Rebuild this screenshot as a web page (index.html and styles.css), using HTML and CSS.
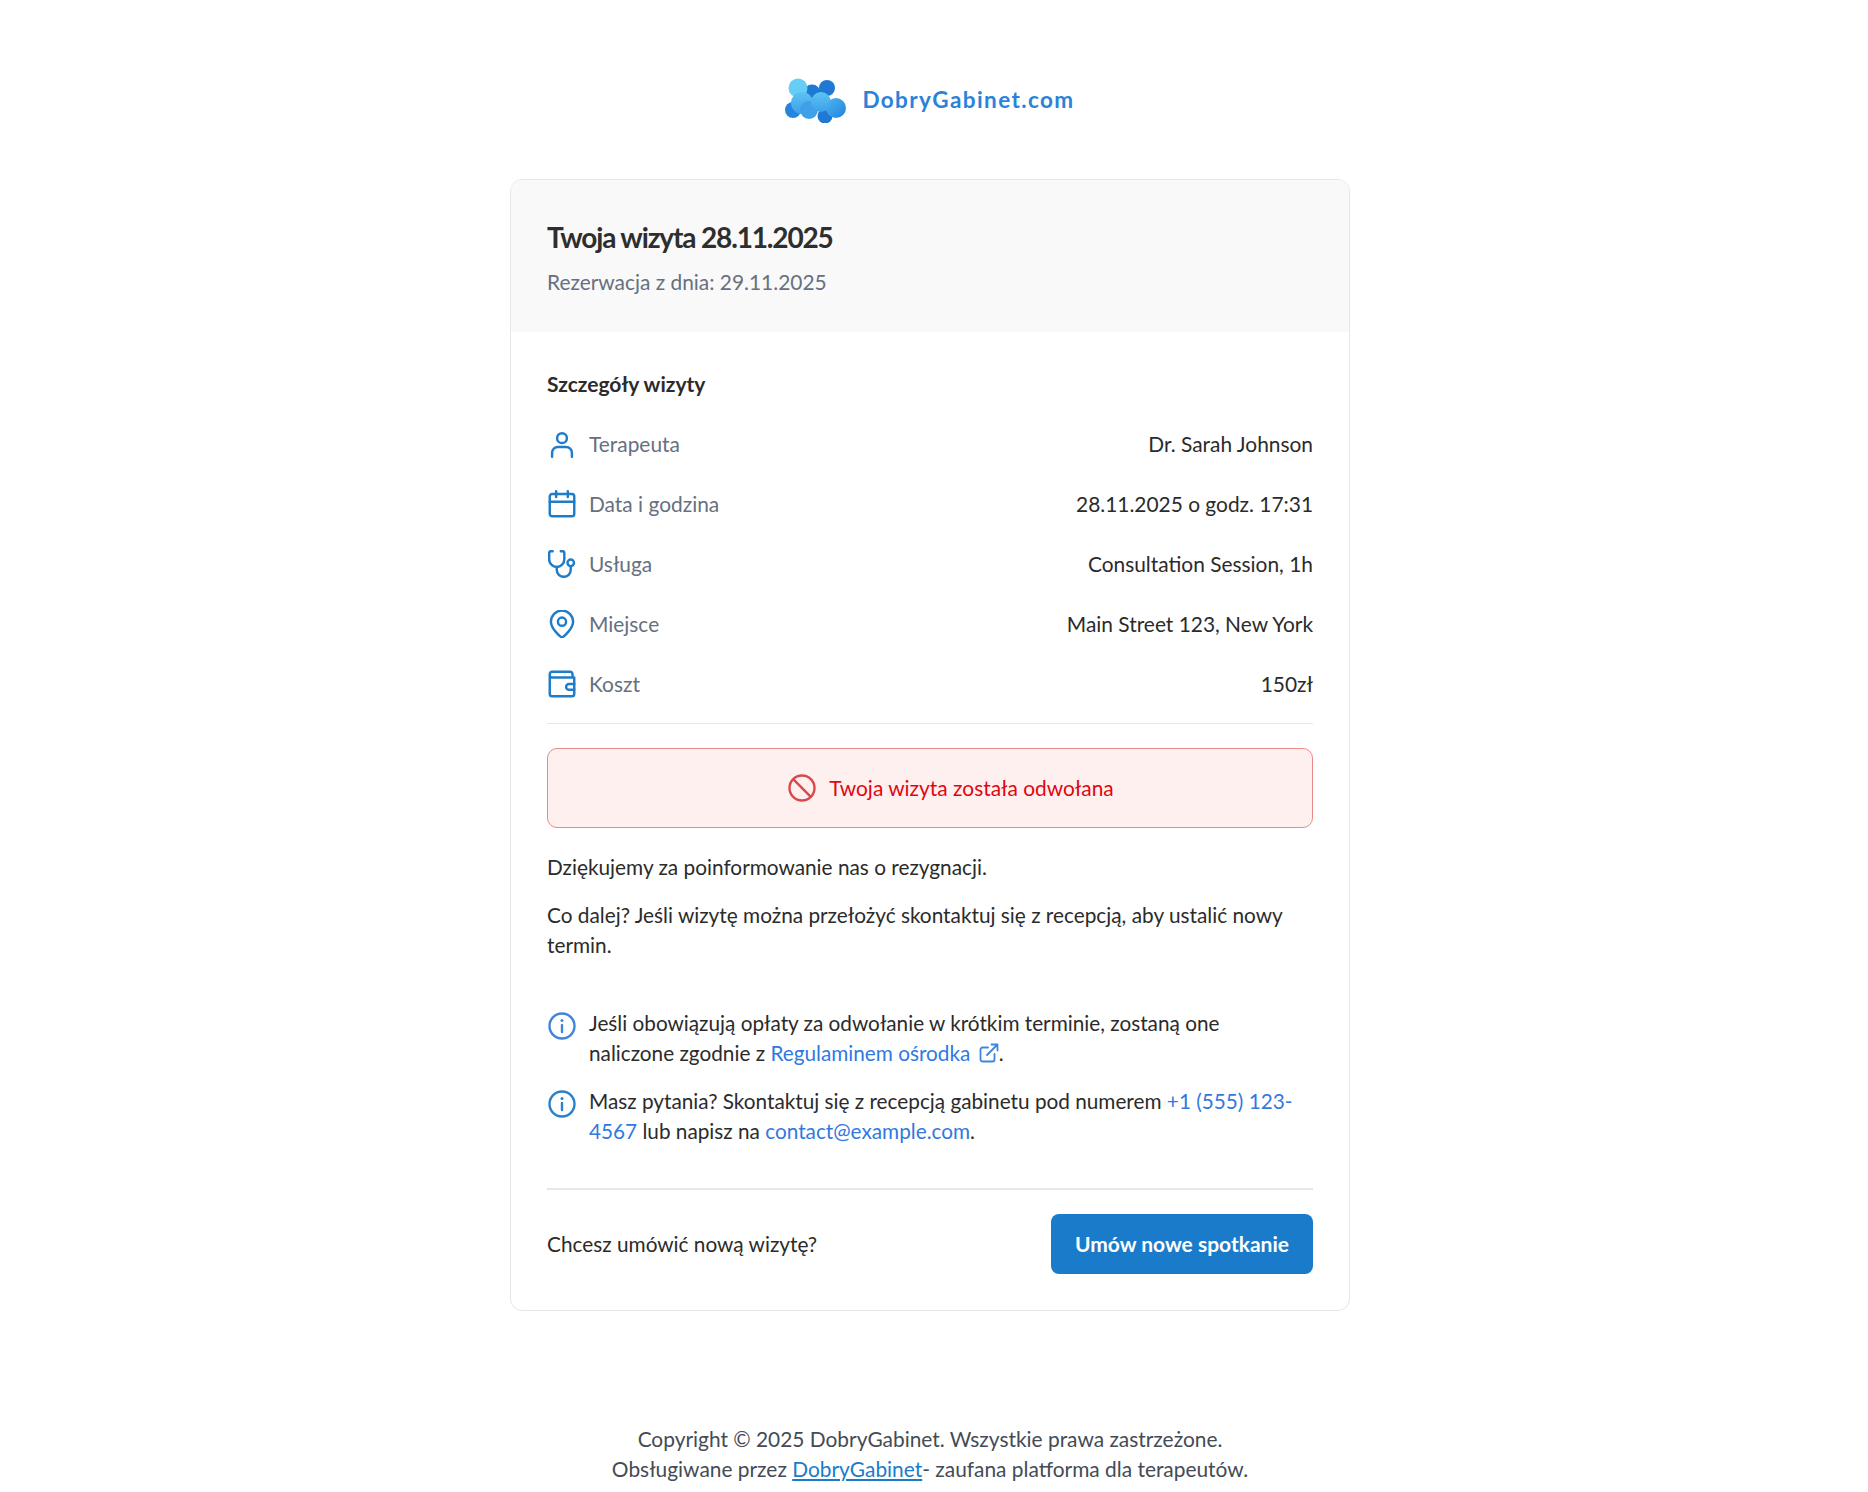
FILE: index.html
```html
<!DOCTYPE html>
<html lang="pl">
<head>
    <meta charset="UTF-8">
    <title>DobryGabinet.com</title>
    <link rel="stylesheet" href="styles.css">
</head>
<body>
    <div class="logo">
        <svg class="logo-mark" width="62" height="46" viewBox="0 0 62 46">
            <defs>
                <linearGradient id="cloud" x1="0" y1="0" x2="1" y2="1">
                    <stop offset="0" stop-color="#4fb6f0"/>
                    <stop offset="1" stop-color="#2282dc"/>
                </linearGradient>
                <linearGradient id="puff" x1="0" y1="0" x2="0" y2="1">
                    <stop offset="0" stop-color="#5cc4f4"/>
                    <stop offset="1" stop-color="#3f9fe8"/>
                </linearGradient>
            </defs>
            <circle cx="27" cy="16" r="8.500" fill="#1f78d1"/>
            <circle cx="42" cy="11" r="8" fill="#1f78d1"/>
            <circle cx="8" cy="33" r="8" fill="#2585dc"/>
            <circle cx="40" cy="39" r="7.500" fill="#1f78d1"/>
            <circle cx="13" cy="11" r="9.500" fill="#66cdf7"/>
            <circle cx="17" cy="26" r="11" fill="url(#puff)"/>
            <circle cx="24" cy="33" r="9" fill="#3f9fe8"/>
            <circle cx="36" cy="25" r="10" fill="url(#puff)"/>
            <circle cx="51" cy="31" r="10" fill="url(#cloud)"/>
        </svg>
        <span class="logo-text">DobryGabinet.com</span>
    </div>

    <div class="card">
        <div class="card-head">
            <h1>Twoja wizyta 28.11.2025</h1>
            <p class="booked">Rezerwacja z dnia: 29.11.2025</p>
        </div>

        <div class="card-body">
            <h2>Szczegóły wizyty</h2>

            <div class="rows">
                <div class="row">
                    <span class="row-label">
                        <svg class="icon" viewBox="0 0 24 24"><circle cx="12" cy="7" r="4.200"/><path d="M3.500 23v-3.500a5 5 0 0 1 5-5h7a5 5 0 0 1 5 5V23"/></svg>
                        Terapeuta
                    </span>
                    <span class="row-value">Dr. Sarah Johnson</span>
                </div>
                <div class="row">
                    <span class="row-label">
                        <svg class="icon" viewBox="0 0 24 24"><rect x="1.500" y="3.500" width="21" height="19" rx="2"/><path d="M1.500 10h21M7 1v5M17 1v5"/></svg>
                        Data i godzina
                    </span>
                    <span class="row-value">28.11.2025 o godz. 17:31</span>
                </div>
                <div class="row">
                    <span class="row-label">
                        <svg class="icon" viewBox="0 0 24 24"><path d="M4 1H2.500A1.500 1.500 0 0 0 1 2.500V8a6.500 6.500 0 0 0 13 0V2.500A1.500 1.500 0 0 0 12.500 1H11"/><path d="M7.500 14.500V17a6 6 0 0 0 12 0v-3"/><circle cx="19.500" cy="11" r="2.800"/></svg>
                        Usługa
                    </span>
                    <span class="row-value">Consultation Session, 1h</span>
                </div>
                <div class="row">
                    <span class="row-label">
                        <svg class="icon" viewBox="0 0 24 24"><path d="M12 23.500c-1 0-9.500-7.500-9.500-13.500a9.500 9.500 0 0 1 19 0c0 6-8.500 13.500-9.500 13.500z"/><circle cx="12" cy="10" r="3.500"/></svg>
                        Miejsce
                    </span>
                    <span class="row-value">Main Street 123, New York</span>
                </div>
                <div class="row">
                    <span class="row-label">
                        <svg class="icon" viewBox="0 0 24 24"><path d="M21 6V3.500a2 2 0 0 0-2-2H3.500a2 2 0 0 0-2 2V20.500a2 2 0 0 0 2 2H20.500a2 2 0 0 0 2-2V6.500H3.500a2 2 0 0 1-2-2"/><path d="M22.500 12H18a2 2 0 0 0 0 5h4.500"/></svg>
                        Koszt
                    </span>
                    <span class="row-value">150zł</span>
                </div>
            </div>

            <div class="alert">
                <svg class="alert-icon" viewBox="0 0 28 28"><circle cx="14" cy="14" r="12.500"/><path d="M5.200 5.200l17.600 17.600"/></svg>
                Twoja wizyta została odwołana
            </div>

            <p class="text">Dziękujemy za poinformowanie nas o rezygnacji.</p>
            <p class="text">Co dalej? Jeśli wizytę można przełożyć skontaktuj się z recepcją, aby ustalić nowy termin.</p>

            <div class="notes">
                <div class="note">
                    <svg class="info-icon" viewBox="0 0 28 28"><circle cx="14" cy="14" r="12.500"/><path d="M14 13v7"/><circle class="dot" cx="14" cy="8.500" r="1.500"/></svg>
                    <p>Jeśli obowiązują opłaty za odwołanie w krótkim terminie, zostaną one naliczone zgodnie z <a href="#">Regulaminem ośrodka <svg class="ext-icon" viewBox="0 0 20 20"><path d="M15.500 11v5.500a2 2 0 0 1-2 2h-10a2 2 0 0 1-2-2v-10a2 2 0 0 1 2-2H9"/><path d="M12.500 1.500h6v6M18.500 1.500L8 12"/></svg></a>.</p>
                </div>
                <div class="note">
                    <svg class="info-icon teal" viewBox="0 0 28 28"><circle cx="14" cy="14" r="12.500"/><path d="M14 13v7"/><circle class="dot" cx="14" cy="8.500" r="1.500"/></svg>
                    <p>Masz pytania? Skontaktuj się z recepcją gabinetu pod numerem <a href="#">+1 (555) 123-4567</a> lub napisz na <a href="#">contact@example.com</a>.</p>
                </div>
            </div>

            <div class="rebook">
                <span>Chcesz umówić nową wizytę?</span>
                <a class="btn" href="#">Umów nowe spotkanie</a>
            </div>
        </div>
    </div>

    <footer class="footer">
        Copyright © 2025 DobryGabinet. Wszystkie prawa zastrzeżone.<br>
        Obsługiwane przez <a href="#">DobryGabinet</a>- zaufana platforma dla terapeutów.
    </footer>
</body>
</html>
```

FILE: styles.css
```css
body {
    font-family: 'Lato', sans-serif;
    font-size: 20.9px;
    line-height: 30px;
    color: #2b2b2b;
    margin: 0;
    padding: 0 8px 0 0;
    background: #fff;
}

/* Logo */
.logo {
    display: flex;
    justify-content: center;
    align-items: center;
    gap: 15px;
    box-sizing: border-box;
    height: 179px;
    padding-top: 21px;
}

.logo-text {
    color: #2a83d9;
    font-size: 22.5px;
    font-weight: 700;
    letter-spacing: 1.4px;
}

/* Card */
.card {
    box-sizing: border-box;
    width: 840px;
    height: 1132px;
    margin: 0 auto;
    border: 1px solid #e7e7e7;
    border-radius: 12px;
    overflow: hidden;
}

.card-head {
    height: 152px;
    box-sizing: border-box;
    padding: 38px 36px 0;
    background: #f9f9f9;
}

h1 {
    margin: 0;
    font-size: 28px;
    line-height: 38px;
    font-weight: 700;
    letter-spacing: -1.15px;
    color: #2e2e2e;
}

.booked {
    margin: 11px 0 0;
    color: #667080;
}

.card-body {
    padding: 37px 36px 0;
}

h2 {
    margin: 0;
    font-size: 21px;
    line-height: 30px;
    font-weight: 700;
}

/* Detail rows */
.rows {
    margin-top: 15px;
    padding-bottom: 9px;
    border-bottom: 1px solid #e7e7e7;
}

.row {
    display: flex;
    justify-content: space-between;
    align-items: center;
    height: 60px;
}

.row-label {
    display: flex;
    align-items: center;
    gap: 13px;
    color: #667080;
}

.icon {
    width: 28px;
    height: 28px;
    margin-left: 1px;
    fill: none;
    stroke: #1f7cc9;
    stroke-width: 2.1;
    stroke-linecap: round;
    stroke-linejoin: round;
}

/* Alert */
.alert {
    display: flex;
    justify-content: center;
    align-items: center;
    gap: 13px;
    box-sizing: border-box;
    height: 80px;
    margin-top: 24px;
    padding-left: 42px;
    border: 1px solid #e98a8a;
    border-radius: 10px;
    background: #fff0f0;
    color: #e0060f;
}

.alert-icon {
    width: 28px;
    height: 28px;
    fill: none;
    stroke: #d9484a;
    stroke-width: 2.4;
}

.text {
    margin: 0;
    margin-top: 18px;
    font-size: 20.8px;
}

.alert + .text {
    margin-top: 24px;
}

/* Notes */
.notes {
    margin-top: 48px;
    padding-bottom: 42px;
    border-bottom: 2px solid #e7e7e7;
}

.note {
    display: flex;
    gap: 13px;
    margin-bottom: 18px;
    font-size: 20.76px;
}

.note:last-child {
    margin-bottom: 0;
}

.note p {
    margin: 0;
    padding-right: 6px;
}

.info-icon {
    flex: none;
    width: 28px;
    height: 28px;
    margin-top: 4px;
    margin-left: 1px;
    fill: none;
    stroke: #3f85dd;
    stroke-width: 2.4;
    stroke-linecap: round;
}

.info-icon.teal {
    stroke: #2a80c9;
}

.info-icon .dot {
    stroke: none;
    fill: #3f85dd;
}

.info-icon.teal .dot {
    fill: #2a80c9;
}

.ext-icon {
    width: 20px;
    height: 20px;
    margin-left: 3px;
    vertical-align: -2px;
    fill: none;
    stroke: #3f85dd;
    stroke-width: 1.8;
    stroke-linecap: round;
    stroke-linejoin: round;
}

a {
    color: #3079e0;
    text-decoration: none;
}

/* Bottom action */
.rebook {
    display: flex;
    justify-content: space-between;
    align-items: center;
    margin-top: 24px;
    font-size: 20.8px;
}

.btn {
    display: block;
    width: 262px;
    box-sizing: border-box;
    height: 60px;
    line-height: 60px;
    text-align: center;
    background: #1a7bca;
    color: #fff;
    font-weight: 700;
    font-size: 21px;
    border-radius: 8px;
}

/* Footer */
.footer {
    margin-top: 113px;
    text-align: center;
    color: #444b55;
    padding-bottom: 9px;
}

.footer a {
    color: #1a7bca;
    text-decoration: underline;
}
```
